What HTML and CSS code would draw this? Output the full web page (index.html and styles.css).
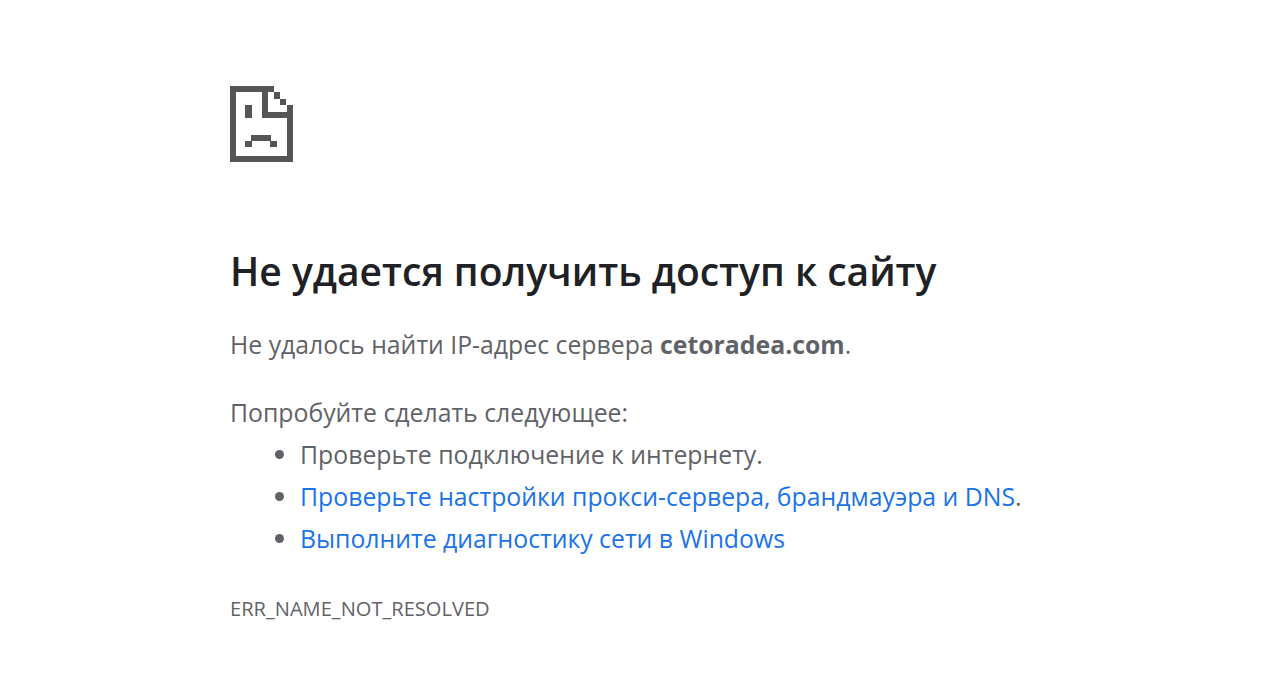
FILE: index.html
```html
<!DOCTYPE html>
<html lang="ru">

<head>
    <meta charset="UTF-8">
    <meta name="viewport" content="width=device-width, initial-scale=1.0">
    <title>cetoradea.com</title>
    <link rel="stylesheet" href="styles.css">
</head>

<body>
    <div class="main-frame">
        <svg class="error-icon" viewBox="0 0 63 76" shape-rendering="crispEdges" aria-hidden="true">
            <!-- page outline -->
            <rect x="0" y="0" width="44" height="6" />
            <rect x="0" y="0" width="6" height="76" />
            <rect x="0" y="70" width="63" height="6" />
            <rect x="57" y="19" width="6" height="57" />
            <!-- folded corner -->
            <rect x="32" y="0" width="6" height="32" />
            <rect x="32" y="26" width="31" height="6" />
            <rect x="44" y="6" width="6" height="7" />
            <rect x="50" y="13" width="6" height="6" />
            <!-- face -->
            <rect x="15" y="19" width="7" height="13" />
            <rect x="21" y="49" width="20" height="6" />
            <rect x="15" y="55" width="7" height="6" />
            <rect x="40" y="55" width="7" height="6" />
        </svg>

        <h1>Не удается получить доступ к сайту</h1>
        <p class="summary">Не удалось найти IP-адрес сервера <strong>cetoradea.com</strong>.</p>

        <div class="suggestions">
            <p>Попробуйте сделать следующее:</p>
            <ul>
                <li>Проверьте подключение к интернету.</li>
                <li><a href="#">Проверьте настройки прокси-сервера, брандмауэра и DNS</a>.</li>
                <li><a href="#">Выполните диагностику сети в Windows</a></li>
            </ul>
        </div>

        <div class="error-code">ERR_NAME_NOT_RESOLVED</div>
    </div>
</body>
</html>
```

FILE: styles.css
```css
html, body {
    margin: 0;
    padding: 0;
    background-color: #fff;
}

body {
    font-family: "Open Sans", "Noto Sans", sans-serif;
    font-size: 24.8px;
    color: #5f6368;
}

.main-frame {
    padding: 86px 0 0 230px;
    width: 900px;
}

.error-icon {
    display: block;
    width: 63px;
    height: 76px;
    fill: #555;
}

h1 {
    margin: 82px 0 0;
    font-size: 39px;
    line-height: 54px;
    font-weight: 600;
    color: #202124;
}

.summary {
    margin: 25px 0 0;
    line-height: 42px;
}

.suggestions {
    margin-top: 26px;
}

.suggestions p {
    margin: 0;
    line-height: 42px;
}

.suggestions ul {
    margin: 0;
    padding-left: 70px;
}

.suggestions li {
    line-height: 42px;
}

a {
    color: #1a73e8;
    text-decoration: none;
}

.error-code {
    margin-top: 36px;
    font-size: 20.1px;
    line-height: 28px;
}
```
